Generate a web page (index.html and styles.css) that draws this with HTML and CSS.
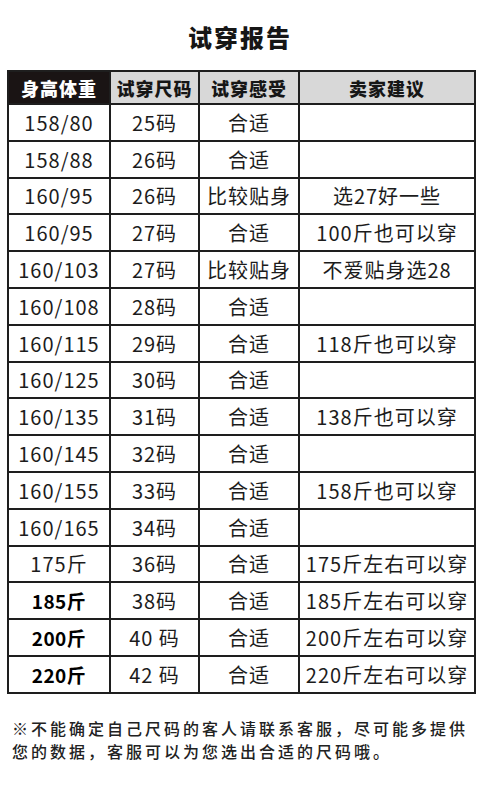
FILE: index.html
```html
<!DOCTYPE html>
<html lang="zh">
<head>
<meta charset="utf-8">
<link rel="stylesheet" href="styles.css">
</head>
<body>
<div class="page">
  <h1 class="title">试穿报告</h1>
  <table class="report">
    <colgroup>
      <col class="c1"><col class="c2"><col class="c3"><col class="c4">
    </colgroup>
    <thead>
      <tr>
        <th class="dark">身高体重</th>
        <th>试穿尺码</th>
        <th>试穿感受</th>
        <th>卖家建议</th>
      </tr>
    </thead>
    <tbody>
      <tr><td>158/80</td><td>25码</td><td>合适</td><td></td></tr>
      <tr><td>158/88</td><td>26码</td><td>合适</td><td></td></tr>
      <tr><td>160/95</td><td>26码</td><td>比较贴身</td><td>选27好一些</td></tr>
      <tr><td>160/95</td><td>27码</td><td>合适</td><td>100斤也可以穿</td></tr>
      <tr><td>160/103</td><td>27码</td><td>比较贴身</td><td>不爱贴身选28</td></tr>
      <tr><td>160/108</td><td>28码</td><td>合适</td><td></td></tr>
      <tr><td>160/115</td><td>29码</td><td>合适</td><td>118斤也可以穿</td></tr>
      <tr><td>160/125</td><td>30码</td><td>合适</td><td></td></tr>
      <tr><td>160/135</td><td>31码</td><td>合适</td><td>138斤也可以穿</td></tr>
      <tr><td>160/145</td><td>32码</td><td>合适</td><td></td></tr>
      <tr><td>160/155</td><td>33码</td><td>合适</td><td>158斤也可以穿</td></tr>
      <tr><td>160/165</td><td>34码</td><td>合适</td><td></td></tr>
      <tr><td>175斤</td><td>36码</td><td>合适</td><td>175斤左右可以穿</td></tr>
      <tr><td class="b">185斤</td><td>38码</td><td>合适</td><td>185斤左右可以穿</td></tr>
      <tr><td class="b">200斤</td><td>40 码</td><td>合适</td><td>200斤左右可以穿</td></tr>
      <tr><td class="b">220斤</td><td>42 码</td><td>合适</td><td>220斤左右可以穿</td></tr>
    </tbody>
  </table>
  <p class="note">※不能确定自己尺码的客人请联系客服，尽可能多提供您的数据，客服可以为您选出合适的尺码哦。</p>
</div>
</body>
</html>
```

FILE: styles.css
```css
html, body {
  margin: 0;
  padding: 0;
  background: #ffffff;
}

body {
  font-family: "Noto Sans CJK SC", "Noto Sans", sans-serif;
  color: #1c1c1c;
}

.page {
  width: 480px;
  height: 790px;
  overflow: hidden;
}

.title {
  margin: 0;
  height: 70px;
  box-sizing: border-box;
  padding-top: 21px;
  text-align: center;
  font-size: 24px;
  line-height: 32px;
  font-weight: 900;
  letter-spacing: 2px;
  color: #161616;
}

.report {
  margin-left: 7px;
  width: 467px;
  border-collapse: collapse;
  table-layout: fixed;
  border: 2px solid #1e1e1e;
}

.c1 { width: 102px; }
.c2 { width: 89px; }
.c3 { width: 100px; }
.c4 { width: 176px; }

.report th,
.report td {
  border: 2px solid #1e1e1e;
  padding: 0;
  text-align: center;
  white-space: nowrap;
  overflow: hidden;
}

.report th {
  height: 31px;
  background: #d8d8d8;
  font-size: 18px;
  font-weight: 900;
  letter-spacing: 1px;
  color: #161616;
}

.report th.dark {
  background: #1a1414;
  color: #ffffff;
}

.report td {
  height: 34.8px;
  font-size: 20px;
  font-weight: 400;
  color: #1c1c1c;
  letter-spacing: 1px;
}

.report td.b {
  font-weight: 700;
  color: #000;
  font-size: 19px;
  letter-spacing: 0.5px;
}

.note {
  margin: 23px 0 0 12px;
  width: 466px;
  font-size: 16px;
  line-height: 23px;
  letter-spacing: 3px;
  font-weight: 500;
  color: #222222;
}
```
